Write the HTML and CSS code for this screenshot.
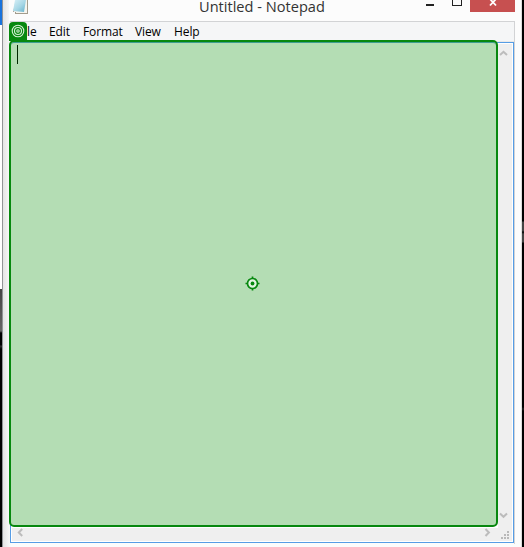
FILE: index.html
```
<!DOCTYPE html>
<html lang="en">
<head>
<meta charset="utf-8">
<title>Untitled - Notepad</title>
<link rel="stylesheet" href="styles.css">
</head>
<body>
<div class="desktop">
  <div class="edge-left"></div>
  <main class="window">
    <header class="titlebar">
      <svg class="app-icon" width="18" height="14" viewBox="0 0 18 14">
        <defs><linearGradient id="paper" x1="0" y1="0" x2="1" y2="1"><stop offset="0" stop-color="#d8f0f7"/><stop offset=".55" stop-color="#a5d6e5"/><stop offset="1" stop-color="#62b0cb"/></linearGradient></defs>
        <path d="M4 0H16V14H3V12H1Z" fill="#a39c8d"/>
        <path d="M4 0H15V13H4V12H2Z" fill="#f5f5ef"/>
        <path d="M3 0H14L12 12L1 11Z" fill="url(#paper)"/>
      </svg>
      <h1 class="title"><span>Untitled - Notepad</span></h1>
      <div class="controls">
        <span class="minimize"></span>
        <span class="maximize"></span>
        <span class="close"><svg width="8" height="7" viewBox="0 0 8 7"><path d="M1 -1L7 5.5M7 -1L1 5.5" stroke="#fff" stroke-width="1.8"/></svg></span>
      </div>
    </header>
    <section class="client">
      <nav class="menu">
        <span class="item file">File</span><span class="item edit">Edit</span><span class="item format">Format</span><span class="item view">View</span><span class="item help">Help</span>
      </nav>
      <div class="editor">
        <div class="document"></div>
        <div class="vscroll">
          <svg width="9" height="7" viewBox="0 0 9 7"><path d="M1 5L4.5 1.8L8 5"/></svg>
          <svg width="9" height="7" viewBox="0 0 9 7"><path d="M1 1.5L4.5 4.8L8 1.5"/></svg>
        </div>
        <div class="hscroll">
          <svg width="7" height="9" viewBox="0 0 7 9"><path d="M5.2 1L1.8 4.5L5.2 8"/></svg>
          <svg width="7" height="9" viewBox="0 0 7 9"><path d="M1.5 1L4.9 4.5L1.5 8"/></svg>
        </div>
        <div class="grip"><svg width="8" height="8" viewBox="0 0 8 8"><path d="M6 0h2v2H6zM3 3h2v2H3zM6 3h2v2H6zM0 6h2v2H0zM3 6h2v2H3zM6 6h2v2H6z" fill="#b9b9b9"/></svg></div>
        <div class="highlight">
          <span class="caret"></span>
          <svg class="target" width="15" height="15" viewBox="0 0 15 15"><path d="M7.5 .5v3M7.5 11.5v3M.5 7.5h3M11.5 7.5h3" stroke="#07880f" stroke-width="1.7"/><circle cx="7.5" cy="7.5" r="5" fill="#e3f5e3" stroke="#07880f" stroke-width="1.7"/><circle cx="7.5" cy="7.5" r="1.9" fill="#07880f"/></svg>
        </div>
      </div>
      <div class="badge"><svg width="14" height="14" viewBox="0 0 14 14" fill="none" stroke="#d5efd5" stroke-width="1.1"><circle cx="7" cy="7" r="5.8"/><circle cx="7" cy="7" r="3.5"/><circle cx="7" cy="7" r="1.2"/></svg></div>
    </section>
  </main>
  <div class="edge-right"></div>
</div>
</body>
</html>
```
FILE: styles.css
```
* { box-sizing: border-box; }
body { margin: 0; overflow: hidden; font-family: "Open Sans", "Noto Sans", sans-serif; }
.desktop { display: grid; grid-template-columns: 2px 520px 2px; height: 547px; }
.edge-left { background: linear-gradient(#1a73dc 0 25px, #fff 25px 289px, #444 289px, #666 331px, #000 333px 345px, #333 346px, #000 349px); }
.edge-right { background: linear-gradient(#000 0 221px, #444 222px 231px, #000 232px, #444 234px 242px, #000 243px 407px, #222 409px, #000 411px); }
.window { display: grid; grid-template-columns: 511px; grid-template-rows: 21px 523px; border-left: 1px solid #929497; border-right: 1px solid #ddd; background: linear-gradient(90deg, #e4e4e4, #fcfcfc 8px); padding-left: 7px; }
.titlebar { display: grid; grid-template-columns: 28px 1fr 93px; padding-right: 2px; background: #fcfcfc; margin-left: -1px; }
.app-icon { margin-left: 3px; }
.title { margin: 0; padding-left: 162px; font-size: 15px; line-height: 12px; font-weight: 400; color: #333; white-space: nowrap; }
.title span { display: inline-block; transform-origin: 0 0; transform: scaleX(.973); }
.controls { display: flex; align-items: flex-start; }
.minimize { width: 8px; height: 2px; margin: 4px 18px 0 0; background: #222; }
.maximize { width: 10px; height: 6px; margin-right: 8px; border: solid #222; border-width: 0 1px 1px; }
.close { width: 45px; height: 12px; flex: none; background: #c75050; display: flex; justify-content: center; }
.client { position: relative; width: 505px; height: 523px; display: grid; grid-template-rows: 20px 501px; border: 1px solid #d2d3d5; border-left: 0; border-bottom: 0; }
.menu { display: flex; background: #f5f6f7; border-bottom: 1px solid #e9e9e9; font-size: 12px; line-height: 20px; color: #000; padding-left: 8px; letter-spacing: -.1px; }
.item { white-space: nowrap; }
.file { width: 31px; }
.edit { width: 34px; }
.format { width: 52px; }
.view { width: 39px; }
.editor { position: relative; display: grid; grid-template-columns: 486px 14px; grid-template-rows: 484px 13px; border: 1px solid #569de5; width: 504px; height: 501px; padding: 1px; background: #fff; }
.document { background: #fff; }
.vscroll, .hscroll { display: flex; justify-content: space-between; background: #efefef; }
.vscroll { flex-direction: column; align-items: center; padding: 6px 3px 9px 0; }
.hscroll { align-items: flex-start; padding: 0 7px 0 5px; }
.vscroll path, .hscroll path { fill: none; stroke: #bcbcbc; stroke-width: 2; }
.grip { background: #efefef; padding: 3px 0 0 3px; line-height: 0; }
.highlight { position: absolute; left: -2px; top: -3px; width: 489px; height: 487px; border: 2px solid #07880f; border-radius: 5px; background: #b4ddb4; box-shadow: inset 0 1px #3f9d92; display: flex; align-items: center; justify-content: center; }
.caret { position: absolute; left: 6px; top: 3px; width: 1px; height: 19px; background: #002800; }
.target { margin: 0 0 0 -2px; }
.badge { position: absolute; left: -1px; top: 0; width: 18px; height: 19px; border-radius: 4px 4px 0 0; background: #07880f; display: flex; justify-content: center; padding-top: 2px; }
```
